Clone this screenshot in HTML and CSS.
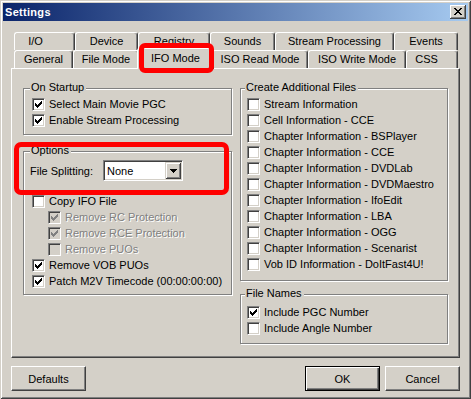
FILE: index.html
```html
<!DOCTYPE html>
<html>
<head>
<meta charset="utf-8">
<title>Settings</title>
<link rel="stylesheet" href="styles.css">
</head>
<body>
<div class="window">
  <div class="titlebar">
    <span class="title">Settings</span>
    <span class="close"><svg viewBox="0 0 8 7" width="8" height="7"><path d="M0 0h2v1h-2z M6 0h2v1h-2z M1 1h2v1h-2z M5 1h2v1h-2z M2 2h4v1h-4z M3 3h2v1h-2z M2 4h4v1h-4z M1 5h2v1h-2z M5 5h2v1h-2z M0 6h2v1h-2z M6 6h2v1h-2z"/></svg></span>
  </div>
  <div class="body">
    <div class="tabs">
      <div class="tabrow row-back">
        <div class="tab tab-io">I/O</div>
        <div class="tab">Device</div>
        <div class="tab">Registry</div>
        <div class="tab">Sounds</div>
        <div class="tab">Stream Processing</div>
        <div class="tab">Events</div>
      </div>
      <div class="tabrow row-front">
        <div class="tab">General</div>
        <div class="tab">File Mode</div>
        <div class="tab active">IFO Mode</div>
        <div class="tab">ISO Read Mode</div>
        <div class="tab">ISO Write Mode</div>
        <div class="tab tab-css">CSS</div>
      </div>
    </div>
    <div class="panel">
      <div class="col col-l">
        <div class="group g-startup">
          <div class="legend">On Startup</div>
          <div class="cbrow"><span class="cb"><svg viewBox="0 0 7 7"><path d="M0 2h1v3h-1z M1 3h1v3h-1z M2 4h1v3h-1z M3 3h1v3h-1z M4 2h1v3h-1z M5 1h1v3h-1z M6 0h1v3h-1z"/></svg></span><span>Select Main Movie PGC</span></div>
          <div class="cbrow"><span class="cb"><svg viewBox="0 0 7 7"><path d="M0 2h1v3h-1z M1 3h1v3h-1z M2 4h1v3h-1z M3 3h1v3h-1z M4 2h1v3h-1z M5 1h1v3h-1z M6 0h1v3h-1z"/></svg></span><span>Enable Stream Processing</span></div>
        </div>
        <div class="group g-options">
          <div class="legend">Options</div>
          <div class="field">
            <span class="field-label">File Splitting:</span>
            <span class="combo"><span class="combo-text">None</span><span class="combo-btn"><svg viewBox="0 0 7 4" width="7" height="4"><path d="M0 0h7v1h-7z M1 1h5v1h-5z M2 2h3v1h-3z M3 3h1v1h-1z"/></svg></span></span>
          </div>
          <div class="cblist">
            <div class="cbrow"><span class="cb"></span><span>Copy IFO File</span></div>
            <div class="cbrow sub disabled"><span class="cb off"><svg viewBox="0 0 7 7"><path d="M0 2h1v3h-1z M1 3h1v3h-1z M2 4h1v3h-1z M3 3h1v3h-1z M4 2h1v3h-1z M5 1h1v3h-1z M6 0h1v3h-1z"/></svg></span><span>Remove RC Protection</span></div>
            <div class="cbrow sub disabled"><span class="cb off"><svg viewBox="0 0 7 7"><path d="M0 2h1v3h-1z M1 3h1v3h-1z M2 4h1v3h-1z M3 3h1v3h-1z M4 2h1v3h-1z M5 1h1v3h-1z M6 0h1v3h-1z"/></svg></span><span>Remove RCE Protection</span></div>
            <div class="cbrow sub disabled"><span class="cb off"></span><span>Remove PUOs</span></div>
            <div class="cbrow"><span class="cb"><svg viewBox="0 0 7 7"><path d="M0 2h1v3h-1z M1 3h1v3h-1z M2 4h1v3h-1z M3 3h1v3h-1z M4 2h1v3h-1z M5 1h1v3h-1z M6 0h1v3h-1z"/></svg></span><span>Remove VOB PUOs</span></div>
            <div class="cbrow"><span class="cb"><svg viewBox="0 0 7 7"><path d="M0 2h1v3h-1z M1 3h1v3h-1z M2 4h1v3h-1z M3 3h1v3h-1z M4 2h1v3h-1z M5 1h1v3h-1z M6 0h1v3h-1z"/></svg></span><span>Patch M2V Timecode (00:00:00:00)</span></div>
          </div>
        </div>
      </div>
      <div class="col col-r">
        <div class="group g-create">
          <div class="legend">Create Additional Files</div>
          <div class="cbrow"><span class="cb"></span><span>Stream Information</span></div>
          <div class="cbrow"><span class="cb"></span><span>Cell Information - CCE</span></div>
          <div class="cbrow"><span class="cb"></span><span>Chapter Information - BSPlayer</span></div>
          <div class="cbrow"><span class="cb"></span><span>Chapter Information - CCE</span></div>
          <div class="cbrow"><span class="cb"></span><span>Chapter Information - DVDLab</span></div>
          <div class="cbrow"><span class="cb"></span><span>Chapter Information - DVDMaestro</span></div>
          <div class="cbrow"><span class="cb"></span><span>Chapter Information - IfoEdit</span></div>
          <div class="cbrow"><span class="cb"></span><span>Chapter Information - LBA</span></div>
          <div class="cbrow"><span class="cb"></span><span>Chapter Information - OGG</span></div>
          <div class="cbrow"><span class="cb"></span><span>Chapter Information - Scenarist</span></div>
          <div class="cbrow"><span class="cb"></span><span>Vob ID Information - DoItFast4U!</span></div>
        </div>
        <div class="group g-names">
          <div class="legend">File Names</div>
          <div class="cbrow"><span class="cb"><svg viewBox="0 0 7 7"><path d="M0 2h1v3h-1z M1 3h1v3h-1z M2 4h1v3h-1z M3 3h1v3h-1z M4 2h1v3h-1z M5 1h1v3h-1z M6 0h1v3h-1z"/></svg></span><span>Include PGC Number</span></div>
          <div class="cbrow"><span class="cb"></span><span>Include Angle Number</span></div>
        </div>
      </div>
    </div>
    <div class="buttons">
      <button class="btn">Defaults</button>
      <button class="btn btn-ok">OK</button>
      <button class="btn btn-cancel">Cancel</button>
    </div>
  </div>
  <div class="mark mark-tab"></div>
  <div class="mark mark-options"></div>
</div>
</body>
</html>
```
FILE: styles.css
```css
html, body {
  margin: 0;
  padding: 0;
  background: #d4d0c8;
}

.window {
  position: relative;
  width: 471px;
  height: 399px;
  box-sizing: border-box;
  padding: 3px;
  background: #d4d0c8;
  box-shadow: inset 1px 1px #d4d0c8, inset -1px -1px #404040, inset 2px 2px #fff, inset -2px -2px #808080;
  font-family: "Liberation Sans", Arial, sans-serif;
  font-size: 11px;
  color: #000;
}

.titlebar {
  height: 18px;
  display: flex;
  align-items: center;
  justify-content: space-between;
  padding: 0 2px;
  background: linear-gradient(to right, #0a246a, #a6caf0);
}

.title {
  color: #fff;
  font-weight: bold;
  letter-spacing: 0.3px;
}

.close {
  width: 16px;
  height: 14px;
  box-sizing: border-box;
  padding: 3px 0 0 4px;
  background: #d4d0c8;
  box-shadow: inset -1px -1px #404040, inset 1px 1px #fff, inset -2px -2px #808080;
}

.close svg {
  display: block;
  fill: #000;
}

.body {
  padding: 11px 8px 5px;
}

.tabs {
  margin-left: 3px;
  width: 444px;
}

.tabrow {
  display: grid;
  height: 18px;
  grid-template-rows: 18px;
}

.row-back {
  grid-template-columns: 61px 63px 72px 65px 119px 64px;
}

.row-front {
  grid-template-columns: 59px 66px 73px 96px 98px 52px;
}

.tab {
  box-sizing: border-box;
  border: 1px solid;
  border-color: #fff #404040 transparent #fff;
  border-bottom: 0;
  border-radius: 3px 3px 0 0;
  box-shadow: inset -1px 0 #808080;
  background: #d4d0c8;
  display: flex;
  align-items: center;
  justify-content: center;
  white-space: nowrap;
  line-height: 1;
}

.tab-io {
  padding-right: 18px;
}

.tab-css {
  padding-right: 11px;
}

.tab.active {
  margin: -2px -2px -1px;
  padding-bottom: 2px;
  position: relative;
  z-index: 2;
}

.panel {
  height: 290px;
  box-sizing: border-box;
  border: 1px solid;
  border-color: #fff #404040 #404040 #fff;
  box-shadow: inset -1px -1px #808080;
  padding: 19px 10px 0 11px;
  display: grid;
  grid-template-columns: 209px 208px;
  column-gap: 8px;
  align-items: start;
}

.col {
  display: flex;
  flex-direction: column;
}

.group {
  position: relative;
  border: 1px solid #808080;
  box-shadow: inset 1px 1px #fff, 1px 1px #fff;
}

.legend {
  position: absolute;
  top: -8px;
  left: 6px;
  padding: 0 2px 0 1px;
  line-height: 13px;
  background: #d4d0c8;
  white-space: nowrap;
}

.col-r .legend {
  left: 4px;
}

.g-startup {
  padding: 7px 0 6px 8px;
}

.g-options {
  margin-top: 16px;
  padding: 8px 0 5px 6px;
}

.g-create {
  padding: 7px 0 8px 6px;
}

.g-names {
  margin-top: 13px;
  padding: 9px 0 7px 6px;
}

.cbrow {
  display: flex;
  align-items: flex-start;
  height: 16px;
  line-height: 16px;
  white-space: nowrap;
}

.cbrow.sub {
  padding-left: 16px;
}

.cb {
  flex: none;
  width: 13px;
  height: 13px;
  margin: 2px 4px 0 0;
  box-sizing: border-box;
  border: 1px solid;
  border-color: #808080 #fff #fff #808080;
  box-shadow: inset 1px 1px #404040, inset -1px -1px #d4d0c8;
  background: #fff;
  padding: 2px;
}

.cb svg {
  display: block;
  width: 7px;
  height: 7px;
  fill: #000;
}

.cb.off {
  background: #d4d0c8;
}

.cb.off svg {
  fill: #808080;
}

.disabled {
  color: #808080;
  text-shadow: 1px 1px 0 #fff;
}

.field {
  display: flex;
  align-items: center;
  height: 21px;
}

.field-label {
  width: 73px;
}

.combo {
  width: 80px;
  height: 21px;
  box-sizing: border-box;
  border: 1px solid;
  border-color: #808080 #fff #fff #808080;
  box-shadow: inset 1px 1px #404040, inset -1px -1px #d4d0c8;
  background: #fff;
  padding: 1px;
  display: flex;
  align-items: center;
}

.combo-text {
  flex: 1;
  padding-left: 2px;
}

.combo-btn {
  width: 16px;
  height: 17px;
  box-sizing: border-box;
  padding: 7px 0 0 5px;
  background: #d4d0c8;
  box-shadow: inset 1px 1px #d4d0c8, inset -1px -1px #404040, inset 2px 2px #fff, inset -2px -2px #808080;
}

.combo-btn svg {
  display: block;
  fill: #000;
}

.cblist {
  margin-top: 12px;
  padding-left: 2px;
}

.buttons {
  display: flex;
  margin-top: 8px;
  height: 25px;
}

.btn {
  width: 75px;
  height: 25px;
  box-sizing: border-box;
  margin: 0;
  padding: 0;
  border: 1px solid;
  border-color: #fff #404040 #404040 #fff;
  border-radius: 0;
  box-shadow: inset -1px -1px #808080;
  background: #d4d0c8;
  font: inherit;
  color: #000;
}

.btn-ok {
  margin-left: auto;
  border-color: #000;
  box-shadow: inset 1px 1px #fff, inset -1px -1px #404040, inset -2px -2px #808080;
}

.btn-cancel {
  margin-left: 5px;
}

.mark {
  position: absolute;
  z-index: 5;
  box-sizing: border-box;
  border: 5px solid #ff0000;
}

.mark-tab {
  left: 139px;
  top: 43px;
  width: 75px;
  height: 30px;
  border-radius: 6px;
}

.mark-options {
  left: 14px;
  top: 142px;
  width: 215px;
  height: 53px;
  border-radius: 7px;
}
```
